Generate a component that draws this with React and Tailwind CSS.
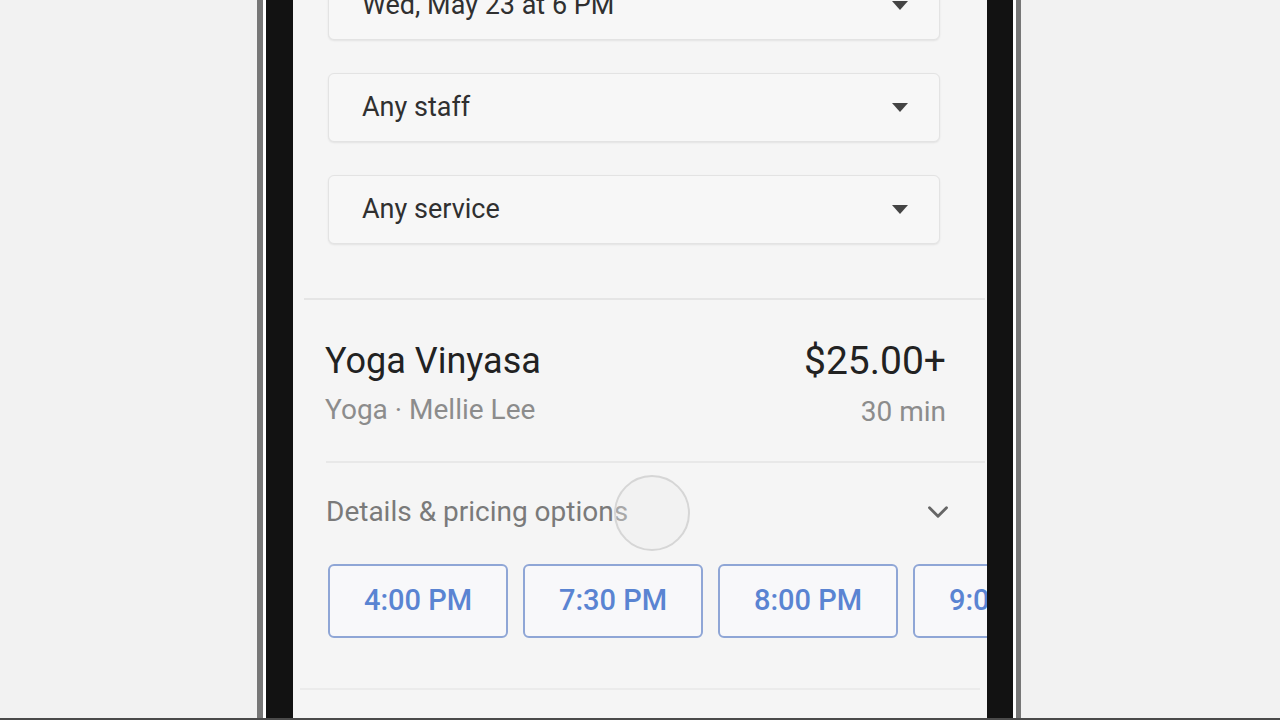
import { ChevronDown } from "lucide-react";

const times = ["4:00 PM", "7:30 PM", "8:00 PM", "9:00 PM"];

function Select({ label, className = "" }) {
    return (
        <div className={`h-[69px] rounded-md border border-[#e3e3e3] bg-[#f7f7f7] shadow-[0_1px_2px_rgba(0,0,0,0.08)] flex items-center justify-between pl-[33px] pr-[31px] ${className}`}>
            <span className="text-[27px] text-[#303030]">{label}</span>
            <svg width="16" height="9" viewBox="0 0 16 9"><path d="M0 0h16L8 9z" fill="#444" /></svg>
        </div>
    );
}

export default function App() {
    return (
        <div className="w-[1280px] h-[720px] flex flex-col bg-[#f2f2f2] overflow-hidden" style={{ fontFamily: "Roboto, 'Liberation Sans', sans-serif" }}>
            <div className="flex h-[718px]">
                <div className="w-[257px] shrink-0" />
                <div className="w-[6px] shrink-0 bg-[#777]" />
                <div className="w-[3px] shrink-0 bg-white" />
                <div className="w-[27px] shrink-0 bg-[#121212]" />

                {/* phone screen */}
                <div className="w-[694px] shrink-0 bg-[#f5f5f5] relative overflow-hidden flex flex-col">
                    <div className="pl-[35px] pr-[47px] flex flex-col gap-[33px] mt-[-29px]">
                        <Select label="Wed, May 23 at 6 PM" />
                        <Select label="Any staff" />
                        <Select label="Any service" className="h-[68px]" />
                    </div>

                    <div className="h-[2px] bg-[#e5e5e5] mt-[54px] ml-[11px] mr-[2px]" />

                    <div className="flex justify-between pl-[32px] pr-[41px] mt-[41px]">
                        <div className="flex flex-col">
                            <span className="text-[36px] leading-[40px] text-[#222]">Yoga Vinyasa</span>
                            <span className="text-[28px] leading-[32px] text-[#8c8c8c] mt-[13px]">Yoga · Mellie Lee</span>
                        </div>
                        <div className="flex flex-col items-end">
                            <span className="text-[39px] leading-[40px] text-[#222]">$25.00+</span>
                            <span className="text-[28px] leading-[32px] text-[#8c8c8c] mt-[15px]">30 min</span>
                        </div>
                    </div>

                    <div className="h-[2px] bg-[#e8e8e8] mt-[33px] ml-[33px] mr-[2px]" />

                    <div className="flex items-center justify-between h-[40px] mt-[29px] pl-[33px] pr-[32px]">
                        <span className="text-[28px] text-[#7a7a7a]">Details &amp; pricing options</span>
                        <ChevronDown className="w-[34px] h-[34px] text-[#666]" strokeWidth={2} />
                    </div>

                    <div className="flex gap-[15px] mt-[32px] pl-[35px]">
                        {times.map(t => (
                            <div key={t} className="w-[180px] h-[74px] shrink-0 rounded-md border-2 border-[#8fa6d6] bg-[#f8f8fa] flex items-center justify-center">
                                <span className="text-[29px] font-medium text-[#5a84d2]">{t}</span>
                            </div>
                        ))}
                    </div>

                    <div className="h-[2px] bg-[#ebebeb] mt-[50px] ml-[7px] mr-[7px]" />

                    {/* touch indicator */}
                    <div className="absolute left-[321px] top-[475px] w-[76px] h-[76px] rounded-full border-2 border-[#d6d6d6] bg-[#eeeeee]/40" />
                </div>

                <div className="w-[26px] shrink-0 bg-[#121212]" />
                <div className="w-[3px] shrink-0 bg-white" />
                <div className="w-[5px] shrink-0 bg-[#777]" />
                <div className="flex-1" />
            </div>
            <div className="h-[2px] bg-[#4a4a4a]" />
        </div>
    );
}
